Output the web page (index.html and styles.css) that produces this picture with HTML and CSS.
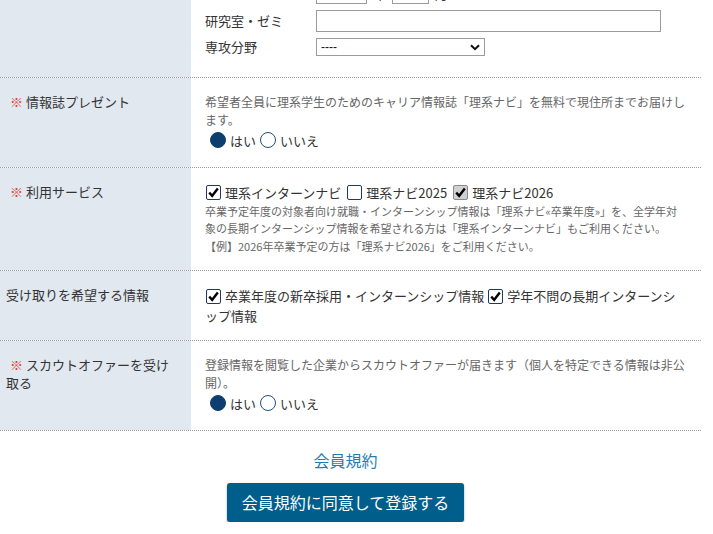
FILE: index.html
```html
<!DOCTYPE html>
<html lang="ja">
<head>
  <meta charset="UTF-8">
  <meta name="viewport" content="width=device-width, initial-scale=1.0">
  <title>会員登録</title>
  <link rel="stylesheet" href="styles.css">
</head>
<body>

  <div id="entry-form">

    <div class="row">
      <div class="row-label"></div>
      <div class="row-body">
        <div class="sub-row">
          <span class="sub-label">卒業年月</span>
          <input type="text" class="input-year">
          <span class="unit">年</span>
          <input type="text" class="input-month">
          <span class="unit">月</span>
        </div>
        <div class="sub-row">
          <span class="sub-label">研究室・ゼミ</span>
          <input type="text" class="input-lab">
        </div>
        <div class="sub-row">
          <span class="sub-label">専攻分野</span>
          <div class="select-box">
            <select class="select-major">
              <option>----</option>
            </select>
            <svg class="select-arrow" width="10" height="7" viewBox="0 0 10 7"><path d="M1 1.2 L5 5.2 L9 1.2" fill="none" stroke="#111" stroke-width="2"/></svg>
          </div>
        </div>
      </div>
    </div>

    <div class="row">
      <div class="row-label"><span class="required">※</span> 情報誌プレゼント</div>
      <div class="row-body">
        <p class="note">希望者全員に理系学生のためのキャリア情報誌「理系ナビ」を無料で現住所までお届けします。</p>
        <div class="choice-line">
          <span class="radio checked"></span><span class="choice-text">はい</span>
          <span class="radio"></span><span class="choice-text">いいえ</span>
        </div>
      </div>
    </div>

    <div class="row">
      <div class="row-label"><span class="required">※</span> 利用サービス</div>
      <div class="row-body">
        <div class="check-line">
          <span class="checkbox"><svg width="13" height="13" viewBox="0 0 13 13"><path d="M2.2 6.6 L5.2 9.8 L10.8 2.6" fill="none" stroke="#000" stroke-width="2.4"/></svg></span><span class="check-text">理系インターンナビ</span>
          <span class="checkbox"></span><span class="check-text">理系ナビ2025</span>
          <span class="checkbox disabled"><svg width="13" height="13" viewBox="0 0 13 13"><path d="M2.2 6.6 L5.2 9.8 L10.8 2.6" fill="none" stroke="#000" stroke-width="2.4"/></svg></span><span class="check-text">理系ナビ2026</span>
        </div>
        <p class="note small">卒業予定年度の対象者向け就職・インターンシップ情報は「理系ナビ«卒業年度»」を、全学年対象の長期インターンシップ情報を希望される方は「理系インターンナビ」もご利用ください。<br>【例】2026年卒業予定の方は「理系ナビ2026」をご利用ください。</p>
      </div>
    </div>

    <div class="row">
      <div class="row-label plain">受け取りを希望する情報</div>
      <div class="row-body">
        <div class="check-line wrap">
          <span class="checkbox"><svg width="13" height="13" viewBox="0 0 13 13"><path d="M2.2 6.6 L5.2 9.8 L10.8 2.6" fill="none" stroke="#000" stroke-width="2.4"/></svg></span>卒業年度の新卒採用・インターンシップ情報 <span class="checkbox"><svg width="13" height="13" viewBox="0 0 13 13"><path d="M2.2 6.6 L5.2 9.8 L10.8 2.6" fill="none" stroke="#000" stroke-width="2.4"/></svg></span>学年不問の長期インターンシップ情報
        </div>
      </div>
    </div>

    <div class="row">
      <div class="row-label"><span class="required">※</span> スカウトオファーを受け取る</div>
      <div class="row-body">
        <p class="note">登録情報を閲覧した企業からスカウトオファーが届きます（個人を特定できる情報は非公開）。</p>
        <div class="choice-line">
          <span class="radio checked"></span><span class="choice-text">はい</span>
          <span class="radio"></span><span class="choice-text">いいえ</span>
        </div>
      </div>
    </div>

  </div>

  <div class="form-footer">
    <a href="#" class="terms-link">会員規約</a>
    <button class="submit-button">会員規約に同意して登録する</button>
  </div>

</body>
</html>
```

FILE: styles.css
```css
body {
  font-family: "Noto Sans CJK JP", "Noto Sans", sans-serif;
  margin: 0;
  color: #333;
  background: #fff;
  overflow: hidden;
}

#entry-form {
  width: 701px;
  margin-top: -33px;
}

.row {
  display: grid;
  grid-template-columns: 191px 1fr;
  border-bottom: 1px dotted #9a9a9a;
}

.row-label {
  background-color: #e1e8f0;
  padding: 15px 15px 15px 6px;
  font-size: 13px;
  line-height: 18px;
}

.required {
  color: #e2412f;
  margin-left: 4px;
}

.row-body {
  padding: 15px 14px 15px 14px;
  font-size: 13px;
}

.sub-row {
  display: flex;
  align-items: center;
  margin-bottom: 6px;
}

.sub-label {
  width: 111px;
  font-size: 13px;
  line-height: 18px;
}

input[type="text"] {
  border: 1px solid #9c9c9c;
  height: 22px;
  box-sizing: border-box;
  padding: 2px 4px;
  margin: 0;
  font-size: 13px;
}

.input-year {
  width: 51px;
}

.input-month {
  width: 37px;
}

.unit {
  margin: 0 6px;
  font-size: 13px;
}

.input-lab {
  width: 345px;
}

.select-box {
  position: relative;
  width: 169px;
  height: 18px;
}

.select-major {
  appearance: none;
  -webkit-appearance: none;
  display: block;
  width: 169px;
  height: 18px;
  border: 1px solid #9c9c9c;
  border-radius: 0;
  background: #fff;
  font-family: "Liberation Sans", sans-serif;
  font-size: 12px;
  padding: 0 4px;
  margin: 0;
  color: #111;
}

.select-arrow {
  position: absolute;
  right: 5px;
  top: 6px;
}

.note {
  margin: 0;
  font-size: 12px;
  line-height: 18px;
  color: #666;
}

.note.small {
  font-size: 11px;
  line-height: 17.5px;
}

.choice-line {
  display: flex;
  align-items: center;
  height: 22.5px;
  padding-left: 5px;
}

.radio {
  width: 16px;
  height: 16px;
  border-radius: 50%;
  box-sizing: border-box;
  border: 1.5px solid #1d4f80;
  background: #fff;
}

.radio.checked {
  background: #0e3e6f;
  border-color: #0e3e6f;
}

.choice-text {
  font-size: 13px;
  margin: 0 4px 0 4px;
}

.check-line {
  display: flex;
  align-items: center;
  font-size: 13px;
  line-height: 20px;
}

.check-line.wrap {
  display: block;
  line-height: 19.5px;
}

.checkbox {
  display: inline-flex;
  align-items: center;
  justify-content: center;
  width: 15px;
  height: 15px;
  box-sizing: border-box;
  border: 1.5px solid #1e3a5e;
  border-radius: 2px;
  background: #fff;
  margin: 0 4px 0 1px;
  vertical-align: -2px;
}

.checkbox.disabled {
  background: #d0d0d0;
  border-color: #8a8a8a;
}

.check-text {
  margin-right: 5px;
}

.form-footer {
  width: 691px;
  display: flex;
  flex-direction: column;
  align-items: center;
  padding-top: 18px;
}

.terms-link {
  color: #1f7db4;
  font-size: 16px;
  line-height: 22px;
  text-decoration: none;
}

.submit-button {
  margin-top: 12px;
  width: 237px;
  height: 39px;
  background-color: #005e8c;
  color: #fff;
  border: none;
  border-radius: 3px;
  box-shadow: 0 1px 2px rgba(0, 0, 0, 0.4);
  font-family: "Noto Sans CJK JP", sans-serif;
  font-size: 16px;
  cursor: pointer;
}
```
